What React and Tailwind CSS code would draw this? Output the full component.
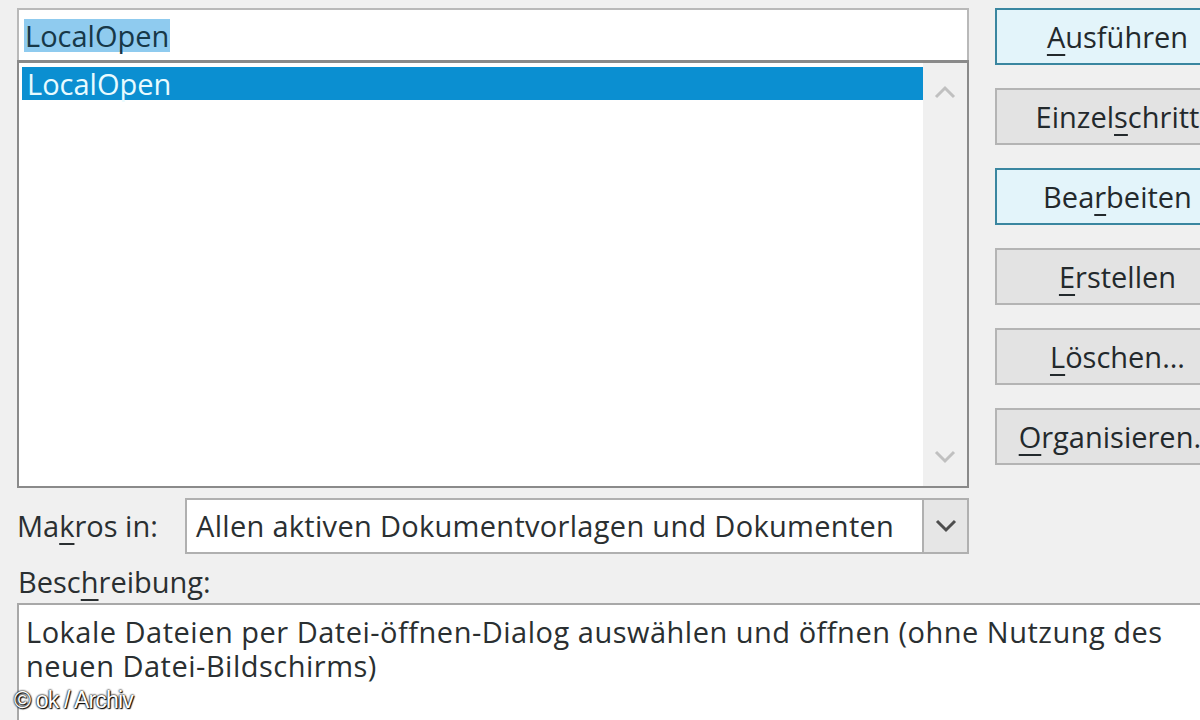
import React from "react";

const font = { fontFamily: '"Open Sans", "Noto Sans", sans-serif' };

function Key({ children }) {
  return <span className="underline decoration-2 underline-offset-[6px]">{children}</span>;
}

function DlgButton({ children, active }) {
  return (
    <div
      className={
        "flex h-[57px] w-[245px] shrink-0 items-center justify-center border-2 text-[29px] text-[#23292c] " +
        (active ? "border-[#3a86a0] bg-[#e3f4fa]" : "border-[#b4b4b4] bg-[#e3e3e3]")
      }
    >
      <span className="whitespace-nowrap">{children}</span>
    </div>
  );
}

function Chevron({ up, className }) {
  return (
    <svg width="22" height="14" viewBox="0 0 22 14" className={className}>
      <path
        d={up ? "M2 12 L11 3 L20 12" : "M2 2 L11 11 L20 2"}
        fill="none"
        stroke="currentColor"
        strokeWidth="3"
      />
    </svg>
  );
}

export default function App() {
  return (
    <div
      className="relative flex h-[720px] w-[1200px] flex-col overflow-hidden bg-[#f0f0f0] pl-[17px] pt-[8px] text-[#2a2f31]"
      style={font}
    >
      <div className="flex">
        {/* left column */}
        <div className="flex w-[952px] shrink-0 flex-col">
          <div className="flex h-[52px] items-center border-2 border-b-0 border-[#b9b9b9] bg-white pl-[5px]">
            <span className="bg-[#8fcbef] px-[1px] text-[29px] leading-[33px] text-[#173848]">LocalOpen</span>
          </div>
          <div className="flex h-[428px] border-2 border-[#8a8a8a] border-t-[3px] bg-white">
            <div className="flex-1 pl-[3px] pt-[4px]">
              <div className="flex h-[33px] items-center bg-[#0b8fd1] pl-[5px] text-[29px] text-[#e8fbff]">
                LocalOpen
              </div>
            </div>
            <div className="flex w-[44px] flex-col items-center justify-between bg-[#f0f0f0] py-[22px] text-[#c0c0c0]">
              <Chevron up />
              <Chevron />
            </div>
          </div>
          <div className="mt-[10px] flex h-[56px] items-center">
            <div className="w-[168px] shrink-0 whitespace-nowrap text-[29px]">
              Ma<Key>k</Key>ros in:
            </div>
            <div className="flex h-full flex-1 border-2 border-[#b0b0b0] bg-white">
              <div className="flex flex-1 items-center whitespace-nowrap pl-[9px] text-[29px] tracking-[0.3px]">
                Allen aktiven Dokumentvorlagen und Dokumenten
              </div>
              <div className="flex w-[45px] items-center justify-center border-l-2 border-[#b0b0b0] bg-[#e6e6e6] text-[#4e4e4e]">
                <Chevron />
              </div>
            </div>
          </div>
        </div>
        {/* buttons */}
        <div className="ml-[26px] flex shrink-0 flex-col gap-[23px]">
          <DlgButton active>
            <Key>A</Key>usführen
          </DlgButton>
          <DlgButton>
            Einzel<Key>s</Key>chritt
          </DlgButton>
          <DlgButton active>
            Bea<Key>r</Key>beiten
          </DlgButton>
          <DlgButton>
            <Key>E</Key>rstellen
          </DlgButton>
          <DlgButton>
            <Key>L</Key>öschen...
          </DlgButton>
          <DlgButton>
            <Key>O</Key>rganisieren...
          </DlgButton>
        </div>
      </div>
      <div className="mt-[10px] pl-[1px] text-[29px] leading-[36px]">
        Besc<Key>h</Key>reibung:
      </div>
      <div className="mt-[3px] w-[1200px] flex-1 whitespace-nowrap border-l-2 border-t-2 border-[#a8a8a8] bg-white pl-[7px] pt-[10px] text-[29px] leading-[34px] tracking-[0.5px]">
        Lokale Dateien per Datei-öffnen-Dialog auswählen und öffnen (ohne Nutzung des
        <br />
        neuen Datei-Bildschirms)
      </div>
      <div
        className="absolute left-[14px] top-[683px] text-[23px] tracking-[-0.8px] text-white"
        style={{
          fontFamily: '"Liberation Sans", Arial, sans-serif',
          textShadow: "0 0 2px #000, 0 0 2px #000, 1px 1px 1px #000",
        }}
      >
        © ok / Archiv
      </div>
    </div>
  );
}
